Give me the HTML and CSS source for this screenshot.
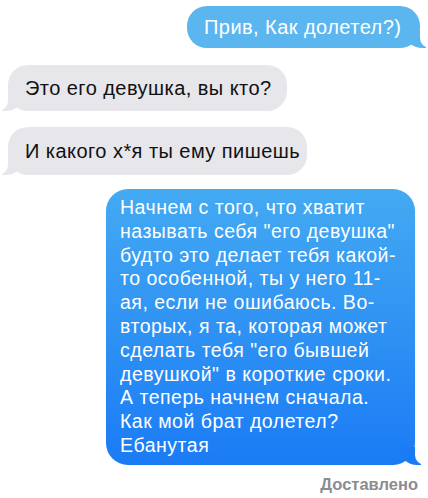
FILE: index.html
```html
<!DOCTYPE html>
<html lang="ru">
<head>
    <meta charset="UTF-8">
    <title>Сообщения</title>
    <link rel="stylesheet" href="styles.css">
</head>
<body>

<div class="chat">
    <div class="msg out light">Прив, Как долетел?)</div>
    <div class="msg in first">Это его девушка, вы кто?</div>
    <div class="msg in second">И какого х*я ты ему пишешь</div>
    <div class="msg out big">
        Начнем с того, что хватит<br>
        называть себя "его девушка"<br>
        будто это делает тебя какой-<br>
        то особенной, ты у него 11-<br>
        ая, если не ошибаюсь. Во-<br>
        вторых, я та, которая может<br>
        сделать тебя "его бывшей<br>
        девушкой" в короткие сроки.<br>
        А теперь начнем сначала.<br>
        Как мой брат долетел?<br>
        Ебанутая
    </div>
    <div class="status">Доставлено</div>
</div>

</body>
</html>
```

FILE: styles.css
```css
* {
    margin: 0;
    padding: 0;
    box-sizing: border-box;
}

body {
    font-family: 'Liberation Sans', Arial, sans-serif;
    background-color: #fff;
    width: 428px;
    height: 498px;
    overflow: hidden;
}

.chat {
    display: flex;
    flex-direction: column;
    padding: 6px 8px 0 8px;
}

.msg {
    position: relative;
    border-radius: 20px;
    font-size: 20px;
    letter-spacing: 0.45px;
    line-height: 22px;
    white-space: nowrap;
}

/* tails */
.msg::before,
.msg::after {
    content: "";
    position: absolute;
    bottom: 0;
    height: 18px;
}

.out {
    align-self: flex-end;
    color: #fff;
}

.out::before {
    right: -6px;
    width: 20px;
    border-bottom-left-radius: 16px 14px;
}

.out::after {
    right: -10px;
    width: 10px;
    background: #fff;
    border-bottom-left-radius: 10px;
}

.in {
    align-self: flex-start;
    color: #111;
    background-color: #e6e6eb;
}

.in::before {
    left: -6px;
    width: 20px;
    background: #e6e6eb;
    border-bottom-right-radius: 16px 14px;
}

.in::after {
    left: -10px;
    width: 10px;
    background: #fff;
    border-bottom-right-radius: 10px;
}

.light {
    width: 233px;
    height: 42px;
    padding: 10px 0 0 17px;
    background-color: #5bb6f0;
}

.light::before {
    background: #5bb6f0;
}

.first {
    width: 279px;
    height: 46px;
    margin-top: 17px;
    padding: 12px 0 0 17px;
}

.second {
    width: 299px;
    height: 48px;
    margin-top: 16px;
    padding: 13px 0 0 17px;
}

.big {
    width: 309px;
    height: 276px;
    margin-top: 14px;
    margin-right: 5px;
    padding: 7px 0 0 14px;
    font-size: 19.5px;
    letter-spacing: 0.5px;
    line-height: 23.8px;
    border-radius: 22px;
    background: linear-gradient(to bottom, #44aaf2, #1a7bf5);
}

.big::before {
    background: #1a7bf5;
}

.status {
    align-self: flex-end;
    margin-top: 10px;
    margin-right: 2px;
    font-size: 16.5px;
    font-weight: bold;
    color: #8c8c90;
}
```
